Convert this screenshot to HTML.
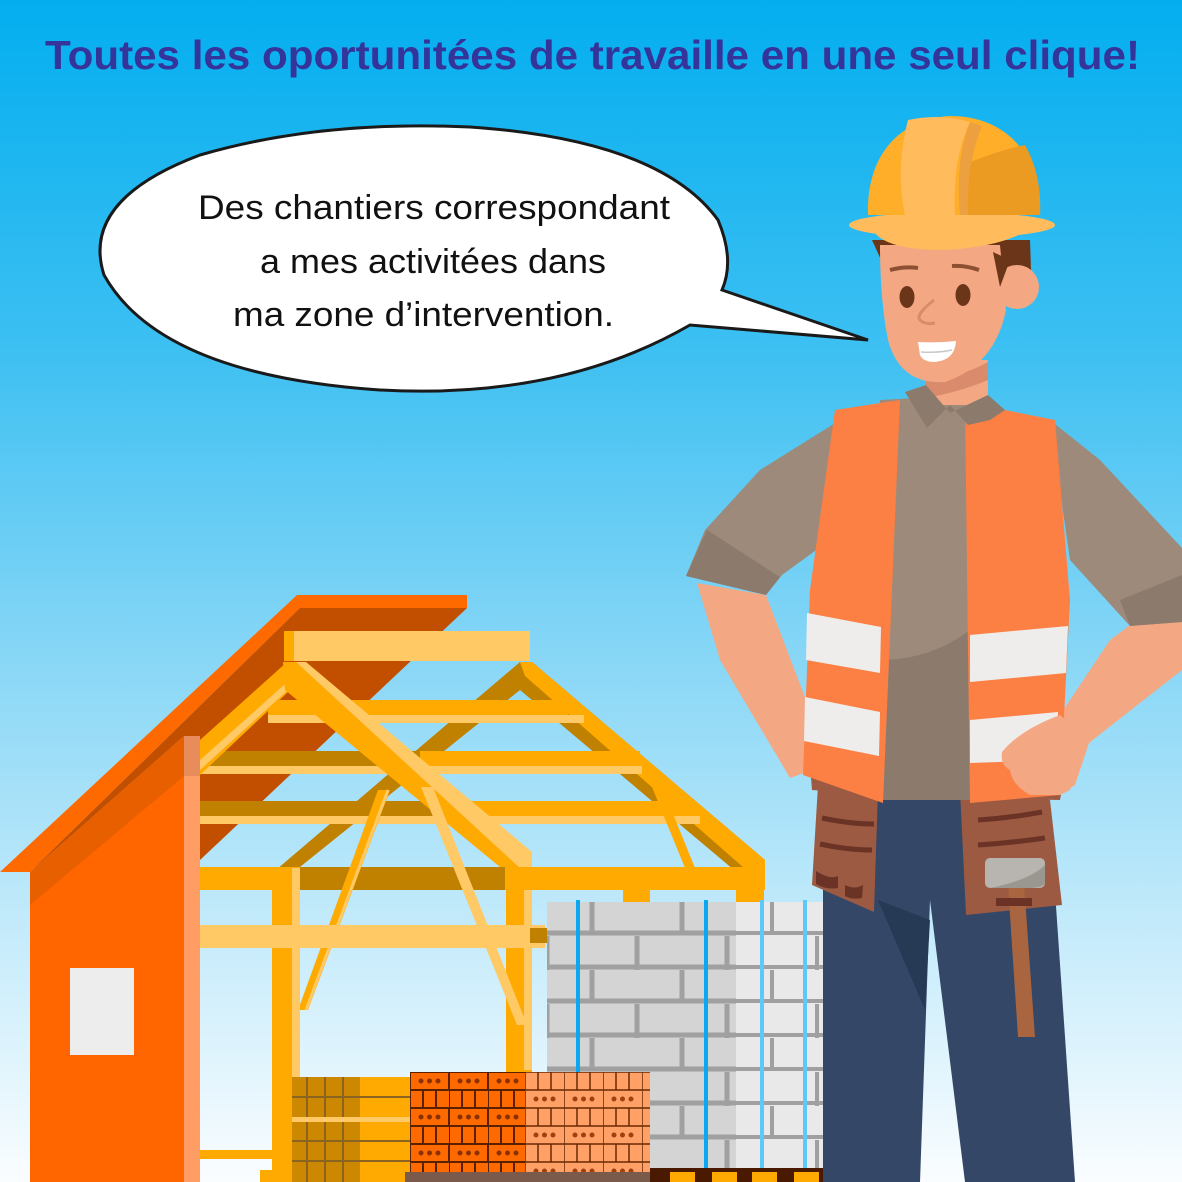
<!DOCTYPE html>
<html><head><meta charset="utf-8"><style>
html,body{margin:0;padding:0;width:1182px;height:1182px;overflow:hidden}
svg{display:block}
</style></head><body>
<svg width="1182" height="1182" viewBox="0 0 1182 1182" xmlns="http://www.w3.org/2000/svg">
<defs>
<linearGradient id="bg" x1="0" y1="0" x2="0" y2="1">
<stop offset="0" stop-color="#03aeef"/>
<stop offset="0.3" stop-color="#3ec0f2"/>
<stop offset="0.55" stop-color="#86d6f6"/>
<stop offset="0.8" stop-color="#c8ecfb"/>
<stop offset="1" stop-color="#fafdff"/>
</linearGradient>
<pattern id="brA" x="410" y="1072" width="39" height="36" patternUnits="userSpaceOnUse">
<rect width="39" height="36" fill="#ff6a00"/>
<rect x="0" y="0" width="39" height="18" fill="none" stroke="#5a2000" stroke-width="2"/>
<circle cx="11" cy="9" r="2.5" fill="#8a3000"/><circle cx="19.5" cy="9" r="2.5" fill="#8a3000"/><circle cx="28" cy="9" r="2.5" fill="#8a3000"/>
<path d="M0 18V36M13 18V36M26 18V36M0 36H39" stroke="#5a2000" stroke-width="2"/>
</pattern>
<pattern id="brB" x="525" y="1072" width="39" height="36" patternUnits="userSpaceOnUse">
<rect width="39" height="36" fill="#ffa066"/>
<path d="M0 0H39M0 0V18M13 0V18M26 0V18M0 18H39M0 18V36M0 36H39" stroke="#6a2800" stroke-width="1.5"/>
<circle cx="11" cy="27" r="2.5" fill="#a04010"/><circle cx="19.5" cy="27" r="2.5" fill="#a04010"/><circle cx="28" cy="27" r="2.5" fill="#a04010"/>
</pattern>
<pattern id="blk" x="547" y="902" width="90" height="68" patternUnits="userSpaceOnUse">
<rect width="90" height="68" fill="#d4d4d4"/>
<path d="M0 31H90M0 65H90M45 0V31M0 34V68M90 34V68" stroke="#a0a0a0" stroke-width="5"/>
</pattern>
<pattern id="blk2" x="547" y="902" width="90" height="68" patternUnits="userSpaceOnUse">
<rect width="90" height="68" fill="#e9e9e9"/>
<path d="M0 31H90M0 65H90M45 0V31M0 34V68M90 34V68" stroke="#a0a0a0" stroke-width="4"/>
</pattern>
</defs>
<rect width="1182" height="1182" fill="url(#bg)"/>

<text x="45" y="69" font-family="Liberation Sans, sans-serif" font-weight="bold" font-size="41" fill="#35349a" textLength="1095" lengthAdjust="spacingAndGlyphs">Toutes les oportunitées de travaille en une seul clique!</text>

<!-- roof -->
<polygon points="0,872 297,595 467,595 467,608 300,608 30,872" fill="#ff6a00"/>
<polygon points="30,872 300,608 467,608 200,860 200,736 184,736" fill="#c24e00"/>
<!-- frame -->
<g>
<rect x="284" y="631" width="246" height="30" fill="#ffc966"/><rect x="284" y="631" width="10" height="30" fill="#ffaa00"/>
<!-- back truss -->
<polygon points="520,662 532,662 765,860 765,875 740,875 520,690 290,875 270,875" fill="#c08000"/>
<polygon points="520,662 532,662 765,860 765,875 752,875 525,676" fill="#ffaa00"/>
<!-- horizontal beams -->
<rect x="268" y="700" width="300" height="15" fill="#ffaa00"/><rect x="268" y="715" width="316" height="8" fill="#ffc966"/>
<rect x="200" y="751" width="430" height="16" fill="#c08000"/><rect x="420" y="751" width="220" height="16" fill="#ffaa00"/><rect x="200" y="766" width="442" height="8" fill="#ffc966"/>
<rect x="200" y="801" width="490" height="16" fill="#c08000"/><rect x="460" y="801" width="230" height="16" fill="#ffaa00"/><rect x="200" y="816" width="500" height="8" fill="#ffc966"/>
<!-- front truss -->
<polygon points="287,662 200,740 200,775 288,692" fill="#ffaa00"/>
<polygon points="288,690 200,770 200,760 285,684" fill="#ffc966"/>
<polygon points="283,662 296,662 532,862 532,1072 506,1072 506,872 285,690" fill="#ffaa00"/>
<polygon points="296,662 306,662 532,852 532,870 522,870" fill="#ffc966"/>
<rect x="524" y="870" width="8" height="200" fill="#ffc966"/>
<!-- bottom beam -->
<rect x="200" y="867" width="565" height="23" fill="#ffaa00"/><rect x="300" y="867" width="205" height="23" fill="#c08000"/>
<!-- braces -->
<polygon points="378,790 390,790 308,1010 298,1010" fill="#ffaa00"/><line x1="388" y1="790" x2="306" y2="1010" stroke="#ffc966" stroke-width="3"/>
<polygon points="421,787 433,787 527,1025 517,1025" fill="#ffc966"/>
<polygon points="652,787 662,787 695,868 685,868" fill="#ffaa00"/>
<!-- posts -->
<rect x="272" y="868" width="28" height="314" fill="#ffaa00"/><rect x="292" y="868" width="8" height="314" fill="#ffc966"/>
<rect x="200" y="925" width="345" height="23" fill="#ffc966"/>
<rect x="530" y="928" width="20" height="15" fill="#c08000"/>
<rect x="200" y="1150" width="72" height="9" fill="#ffaa00"/>
<rect x="260" y="1170" width="30" height="12" fill="#ffaa00"/>
<rect x="623" y="889" width="27" height="14" fill="#ffaa00"/><rect x="736" y="889" width="28" height="14" fill="#ffaa00"/>
</g>
<!-- wall -->
<polygon points="30,872 184,736 200,736 200,1182 30,1182" fill="#ff6600"/>
<polygon points="30,872 184,736 184,776 30,905" fill="#e85f00"/>
<rect x="184" y="736" width="16" height="446" fill="#ff9d64"/>
<rect x="184" y="736" width="16" height="40" fill="#e88c5c"/>
<rect x="70" y="968" width="64" height="87" fill="#ededed"/>

<!-- lumber -->
<rect x="292" y="1077" width="118" height="105" fill="#ffaa00"/>
<rect x="292" y="1077" width="68" height="105" fill="#cc8800"/>
<path d="M307 1077V1182M325 1077V1182M343 1077V1182M292 1097H410M292 1141H410M292 1161H410" stroke="#8a6420" stroke-width="2"/>
<rect x="292" y="1117" width="118" height="5" fill="#ffc966"/>

<!-- blocks -->
<rect x="547" y="902" width="190" height="268" fill="url(#blk)"/>
<rect x="736" y="902" width="88" height="268" fill="url(#blk2)"/>
<rect x="576" y="900" width="4" height="270" fill="#0aa8f0"/>
<rect x="704" y="900" width="4" height="270" fill="#0aa8f0"/>
<rect x="760" y="900" width="4" height="270" fill="#5ec8fb"/>
<rect x="803" y="900" width="4" height="270" fill="#5ec8fb"/>
<rect x="650" y="1168" width="175" height="14" fill="#4a1a00"/>
<rect x="670" y="1172" width="25" height="10" fill="#ffaa00"/><rect x="712" y="1172" width="25" height="10" fill="#ffaa00"/><rect x="752" y="1172" width="25" height="10" fill="#ffaa00"/><rect x="794" y="1172" width="25" height="10" fill="#ffaa00"/>
<!-- bricks -->
<rect x="410" y="1072" width="115" height="100" fill="url(#brA)"/>
<rect x="525" y="1072" width="125" height="100" fill="url(#brB)"/>
<rect x="405" y="1172" width="245" height="10" fill="#7a5a4a"/>

<!-- worker -->
<!-- jeans -->
<polygon points="823,795 1048,790 1075,1182 965,1182 930,900 920,1182 823,1182" fill="#344767"/>
<polygon points="878,900 930,920 925,1010" fill="#263a55"/>
<!-- pouches -->
<polygon points="818,785 878,790 874,912 812,885" fill="#9c5a42"/>
<polygon points="960,790 1050,800 1062,905 966,915" fill="#9c5a42"/>
<path d="M822 818Q850 824 874 824M820 844Q848 850 872 850M978 820Q1010 818 1042 812M978 845Q1010 843 1045 838" stroke="#6a3325" stroke-width="5" fill="none"/>
<path d="M816 871Q830 880 838 876L838 888Q826 890 816 884Z M845 885Q855 890 863 885L862 898Q852 900 845 896Z" fill="#6a3325"/>
<!-- belt -->
<polygon points="810,765 1065,772 1060,800 960,798 930,790 878,795 812,790" fill="#9c5a42"/>
<!-- hammer -->
<polygon points="1008,884 1024,884 1035,1037 1018,1037" fill="#a8653f"/>
<rect x="985" y="858" width="60" height="30" rx="5" fill="#b8b4b0"/>
<path d="M990 888Q1030 880 1045 865L1045 884Q1040 888 1030 888Z" fill="#9a9690"/>
<rect x="996" y="898" width="36" height="8" fill="#6a3325"/>
<!-- left sleeve & arm -->
<polygon points="697,583 766,595 806,700 812,770 790,778 720,660" fill="#f3a883"/>
<polygon points="840,420 760,470 705,530 686,576 766,595 782,575 830,540" fill="#9e8a7a"/>
<polygon points="707,530 686,576 766,595 780,577" fill="#8c7b6c"/>
<!-- right sleeve & arm -->
<polygon points="1130,625 1182,620 1182,670 1080,750 1070,790 1060,795 1030,795 1005,780 1002,752 1060,715 1110,640" fill="#f3a883"/>
<polygon points="1050,420 1100,460 1182,548 1182,622 1130,626 1070,560" fill="#9e8a7a"/>
<polygon points="1120,600 1182,575 1182,622 1130,626" fill="#8c7b6c"/>
<!-- shirt middle -->
<polygon points="880,400 970,395 970,800 880,800" fill="#9e8a7a"/>
<path d="M880 660Q930 660 970 630L970 800L880 800Z" fill="#8c7b6c"/>
<!-- vest left -->
<polygon points="835,410 900,400 883,803 803,775 810,590" fill="#fc8044"/>
<polygon points="807,613 881,627 880,673 806,660" fill="#efedeb"/>
<polygon points="805,697 880,712 879,756 804,741" fill="#efedeb"/>
<!-- vest right -->
<polygon points="965,402 1055,420 1070,600 1060,795 970,803 968,650" fill="#fc8044"/>
<polygon points="970,635 1068,626 1066,673 970,682" fill="#efedeb"/>
<polygon points="970,720 1058,712 1056,760 970,763" fill="#efedeb"/>
<!-- right fist over vest -->
<path d="M1060,715 Q1020,730 1002,752 Q1000,765 1010,770 Q1012,785 1030,795 L1060,795 L1075,785 L1090,740 Z" fill="#f3a883"/>
<!-- neck & collar -->
<rect x="925" y="360" width="63" height="45" fill="#f3a883"/>
<path d="M925 378Q960 378 988 362L988 380Q960 392 925 398Z" fill="#d98b6c"/>
<polygon points="905,392 926,385 950,413 988,395 1005,410 990,420 968,425 950,405 927,428" fill="#8c7b6c"/>
<!-- hair -->
<polygon points="872,240 1030,240 1032,300 995,300 990,260 882,262" fill="#6b3519"/>
<!-- ear -->
<circle cx="1017" cy="287" r="22" fill="#f3a883"/>
<!-- face -->
<path d="M880,245 L1000,245 L1006,310 Q995,365 945,382 Q900,385 888,340 Q880,300 880,245Z" fill="#f3a883"/>
<polygon points="993,252 1010,260 1000,287" fill="#6b3519"/>
<path d="M890 270Q905 266 918 268M952 266Q965 265 979 270" stroke="#8e5033" stroke-width="4" fill="none"/>
<ellipse cx="907" cy="297" rx="7.5" ry="11" fill="#6b3519"/>
<ellipse cx="963" cy="295" rx="7.5" ry="11" fill="#6b3519"/>
<path d="M934 300Q915 315 920 320Q925 325 935 323" stroke="#d98b6c" stroke-width="3" fill="none"/>
<path d="M918,342 Q938,343 956,341 Q955,360 935,362 Q923,362 920,355Z" fill="#fff"/>
<path d="M921 352Q938 353 952 350" stroke="#c8c8c8" stroke-width="1.5" fill="none"/>
<!-- helmet -->
<ellipse cx="952" cy="225" rx="103" ry="13" fill="#ffbb5c"/>
<path d="M868,215 C866,150 905,118 950,116 C1010,116 1042,160 1040,215 Z" fill="#ffae2a"/>
<path d="M963,215 L963,165 Q1000,150 1025,145 Q1042,175 1040,215Z" fill="#eb9a22"/>
<path d="M908,120 Q895,170 905,215 L955,215 Q952,160 970,122 Q940,113 908,120Z" fill="#ffbb5c"/>
<path d="M960,215 Q955,160 970,122 L982,126 Q966,165 968,215Z" fill="#eca040"/>
<path d="M872,225 Q900,240 952,240 Q1005,238 1038,225 Q1000,248 955,248 Q890,246 872,225Z" fill="#ffbb5c"/>
<path d="M872,228 Q880,248 935,250 Q990,250 1005,232" fill="#ffbb5c"/>

<!-- speech bubble -->
<path d="M722,290 L868,340 L690,325 Q560,400 380,390 Q160,375 104,275 Q80,200 200,155 Q320,120 470,127 Q660,140 718,220 Q735,260 722,290Z" fill="#fff" stroke="#1a1a1a" stroke-width="3" stroke-linejoin="miter"/>
<g font-family="Liberation Sans, sans-serif" font-size="34" fill="#111">
<text x="198" y="219" textLength="472" lengthAdjust="spacingAndGlyphs">Des chantiers correspondant</text>
<text x="260" y="273" textLength="346" lengthAdjust="spacingAndGlyphs">a mes activitées dans</text>
<text x="233" y="326" textLength="381" lengthAdjust="spacingAndGlyphs">ma zone d’intervention.</text>
</g>
</svg>
</body></html>
